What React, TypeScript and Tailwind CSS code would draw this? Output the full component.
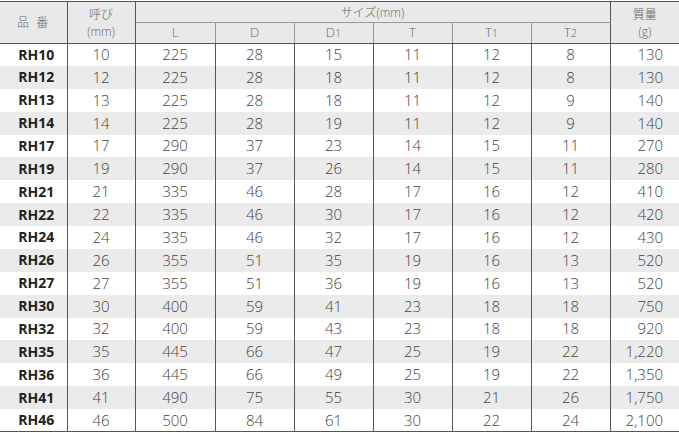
const rows: (string | number)[][] = [
  ['RH10', 10, 225, 28, 15, 11, 12, 8, '130'],
  ['RH12', 12, 225, 28, 18, 11, 12, 8, '130'],
  ['RH13', 13, 225, 28, 18, 11, 12, 9, '140'],
  ['RH14', 14, 225, 28, 19, 11, 12, 9, '140'],
  ['RH17', 17, 290, 37, 23, 14, 15, 11, '270'],
  ['RH19', 19, 290, 37, 26, 14, 15, 11, '280'],
  ['RH21', 21, 335, 46, 28, 17, 16, 12, '410'],
  ['RH22', 22, 335, 46, 30, 17, 16, 12, '420'],
  ['RH24', 24, 335, 46, 32, 17, 16, 12, '430'],
  ['RH26', 26, 355, 51, 35, 19, 16, 13, '520'],
  ['RH27', 27, 355, 51, 36, 19, 16, 13, '520'],
  ['RH30', 30, 400, 59, 41, 23, 18, 18, '750'],
  ['RH32', 32, 400, 59, 43, 23, 18, 18, '920'],
  ['RH35', 35, 445, 66, 47, 25, 19, 22, '1,220'],
  ['RH36', 36, 445, 66, 49, 25, 19, 22, '1,350'],
  ['RH41', 41, 490, 75, 55, 30, 21, 26, '1,750'],
  ['RH46', 46, 500, 84, 61, 30, 22, 24, '2,100'],
];

// 열 너비 (px): 품번, 호칭, L, D, D1, T, T1, T2, 질량
const widths = [67, 68, 80, 79, 79, 79, 79, 79, 69];

const jp = { fontFamily: '"Noto Sans CJK JP", sans-serif' };

function Sub({ base, sub }: { base: string; sub?: string }) {
  return (
    <span>
      {base}
      {sub && <span className="text-[11px]">{sub}</span>}
    </span>
  );
}

export default function App() {
  return (
    <div
      className="w-[679px] h-[433px] bg-white pt-px text-[#444]"
      style={{ fontFamily: '"Open Sans", "Noto Sans CJK JP", sans-serif' }}
    >
      <table className="w-[679px] table-fixed border-collapse border-t border-b border-[#555]">
        <colgroup>
          {widths.map((w, i) => (
            <col key={i} style={{ width: w }} />
          ))}
        </colgroup>
        <thead className="bg-[#e9e9e9] text-[12px] text-[#666]">
          <tr className="h-[20px]">
            <th
              rowSpan={2}
              className="border-r border-b border-[#555] font-light tracking-[0.6em] pl-[6px]"
              style={jp}
            >
              品番
            </th>
            <th rowSpan={2} className="border-r border-b border-[#555] font-light leading-[17px] p-0">
              <span style={jp}>呼び</span>
              <br />
              (mm)
            </th>
            <th colSpan={6} className="border-r border-b border-[#999] border-r-[#555] font-light p-0 leading-[19px]">
              <span style={jp}>サイズ</span>(mm)
            </th>
            <th rowSpan={2} className="border-b border-[#555] font-light leading-[17px] p-0">
              <span style={jp}>質量</span>
              <br />
              (g)
            </th>
          </tr>
          <tr className="h-[20px] text-[13px]">
            <th className="border-r border-b border-[#999] border-b-[#555] font-light">L</th>
            <th className="border-r border-b border-[#999] border-b-[#555] font-light">D</th>
            <th className="border-r border-b border-[#999] border-b-[#555] font-light">
              <Sub base="D" sub="1" />
            </th>
            <th className="border-r border-b border-[#999] border-b-[#555] font-light">T</th>
            <th className="border-r border-b border-[#999] border-b-[#555] font-light">
              <Sub base="T" sub="1" />
            </th>
            <th className="border-r border-b border-[#555] font-light">
              <Sub base="T" sub="2" />
            </th>
          </tr>
        </thead>
        <tbody className="text-[15px] font-light">
          {rows.map((r, ri) => (
            <tr key={ri} className={`h-[22.88px] ${ri % 2 === 1 ? 'bg-[#ebebeb]' : 'bg-white'}`}>
              {r.map((c, ci) => (
                <td
                  key={ci}
                  className={`text-center leading-none p-0 ${
                    ci < 8 ? 'border-r border-[#555]' : ''
                  } ${ci === 0 ? 'font-bold text-[#222] text-[14px] pl-[6px]' : ''} ${
                    ci === 8 ? 'text-right pr-[16px]' : ''
                  }`}
                >
                  {c}
                </td>
              ))}
            </tr>
          ))}
        </tbody>
      </table>
    </div>
  );
}
